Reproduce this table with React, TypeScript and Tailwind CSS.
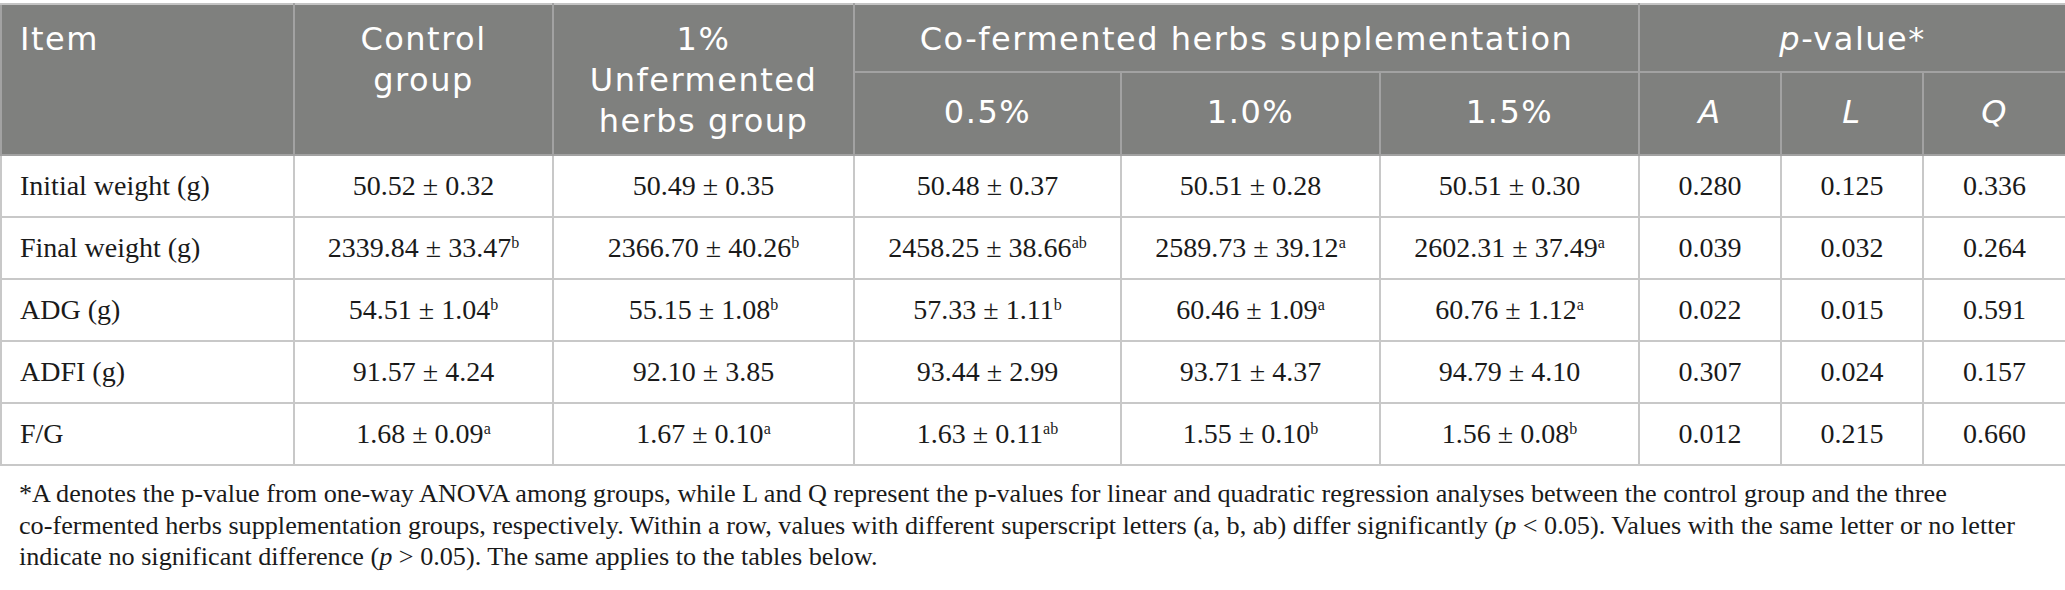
const head = "font-['DejaVu_Sans',_'Open_Sans',_sans-serif] font-normal text-[32px] leading-[41px] tracking-[1.5px] text-white";
const serif = "font-['Liberation_Serif',_'Times_New_Roman',_serif]";

type Cell = { v: string; s?: string };

const rows: { item: string; cells: Cell[]; p: string[] }[] = [
  {
    item: "Initial weight (g)",
    cells: [{ v: "50.52 ± 0.32" }, { v: "50.49 ± 0.35" }, { v: "50.48 ± 0.37" }, { v: "50.51 ± 0.28" }, { v: "50.51 ± 0.30" }],
    p: ["0.280", "0.125", "0.336"],
  },
  {
    item: "Final weight (g)",
    cells: [
      { v: "2339.84 ± 33.47", s: "b" },
      { v: "2366.70 ± 40.26", s: "b" },
      { v: "2458.25 ± 38.66", s: "ab" },
      { v: "2589.73 ± 39.12", s: "a" },
      { v: "2602.31 ± 37.49", s: "a" },
    ],
    p: ["0.039", "0.032", "0.264"],
  },
  {
    item: "ADG (g)",
    cells: [
      { v: "54.51 ± 1.04", s: "b" },
      { v: "55.15 ± 1.08", s: "b" },
      { v: "57.33 ± 1.11", s: "b" },
      { v: "60.46 ± 1.09", s: "a" },
      { v: "60.76 ± 1.12", s: "a" },
    ],
    p: ["0.022", "0.015", "0.591"],
  },
  {
    item: "ADFI (g)",
    cells: [{ v: "91.57 ± 4.24" }, { v: "92.10 ± 3.85" }, { v: "93.44 ± 2.99" }, { v: "93.71 ± 4.37" }, { v: "94.79 ± 4.10" }],
    p: ["0.307", "0.024", "0.157"],
  },
  {
    item: "F/G",
    cells: [
      { v: "1.68 ± 0.09", s: "a" },
      { v: "1.67 ± 0.10", s: "a" },
      { v: "1.63 ± 0.11", s: "ab" },
      { v: "1.55 ± 0.10", s: "b" },
      { v: "1.56 ± 0.08", s: "b" },
    ],
    p: ["0.012", "0.215", "0.660"],
  },
];

const th = "border-2 border-[#a2a2a2] align-top pt-[14px] px-1 font-normal";
const th2 = "border-2 border-[#a2a2a2] align-top pt-[19px] px-1 font-normal text-center";
const td = "border-2 border-[#c8c8c8] h-[62px] align-middle text-center px-2 whitespace-nowrap";

export default function App() {
  return (
    <div className="w-[2065px] h-[590px] bg-white pt-[3px]">
      <table className={`table-fixed w-[2065px] border-collapse border-2 border-[#c8c8c8] ${serif} text-[28px] text-[#1a1a1a]`}>
        <colgroup>
          <col className="w-[293px]" />
          <col className="w-[259px]" />
          <col className="w-[301px]" />
          <col className="w-[267px]" />
          <col className="w-[259px]" />
          <col className="w-[259px]" />
          <col className="w-[142px]" />
          <col className="w-[142px]" />
          <col className="w-[143px]" />
        </colgroup>
        <thead className={`bg-[#7f807e] ${head}`}>
          <tr className="h-[68px]">
            <th rowSpan={2} className={`${th} text-left pl-[18px] border-t-[#c4c4c4]`}>Item</th>
            <th rowSpan={2} className={`${th} text-center border-t-[#c4c4c4]`}>Control<br />group</th>
            <th rowSpan={2} className={`${th} text-center border-t-[#c4c4c4]`}>1%<br />Unfermented<br />herbs group</th>
            <th colSpan={3} className={`${th} text-center border-t-[#c4c4c4]`}>Co-fermented herbs supplementation</th>
            <th colSpan={3} className={`${th} text-center border-t-[#c4c4c4]`}>
              <i>p</i>-value*
            </th>
          </tr>
          <tr className="h-[83px]">
            <th className={th2}>0.5%</th>
            <th className={th2}>1.0%</th>
            <th className={th2}>1.5%</th>
            <th className={th2}><i>A</i></th>
            <th className={th2}><i>L</i></th>
            <th className={th2}><i>Q</i></th>
          </tr>
        </thead>
        <tbody>
          {rows.map((r) => (
            <tr key={r.item}>
              <td className={`${td} text-left! pl-[18px]`}>{r.item}</td>
              {r.cells.map((c, i) => (
                <td key={i} className={td}>
                  {c.v}
                  {c.s && <sup className="text-[16px] relative -top-[9px] align-baseline">{c.s}</sup>}
                </td>
              ))}
              {r.p.map((p, i) => (
                <td key={i} className={td}>{p}</td>
              ))}
            </tr>
          ))}
        </tbody>
      </table>
      <p className={`${serif} text-[26.2px] leading-[31.5px] text-[#1a1a1a] pl-[19px] mt-[12px] whitespace-nowrap`}>
        *A denotes the p-value from one-way ANOVA among groups, while L and Q represent the p-values for linear and quadratic regression analyses between the control group and the three
        <br />
        co-fermented herbs supplementation groups, respectively. Within a row, values with different superscript letters (a, b, ab) differ significantly (<i>p</i> &lt; 0.05). Values with the same letter or no letter
        <br />
        indicate no significant difference (<i>p</i> &gt; 0.05). The same applies to the tables below.
      </p>
    </div>
  );
}
